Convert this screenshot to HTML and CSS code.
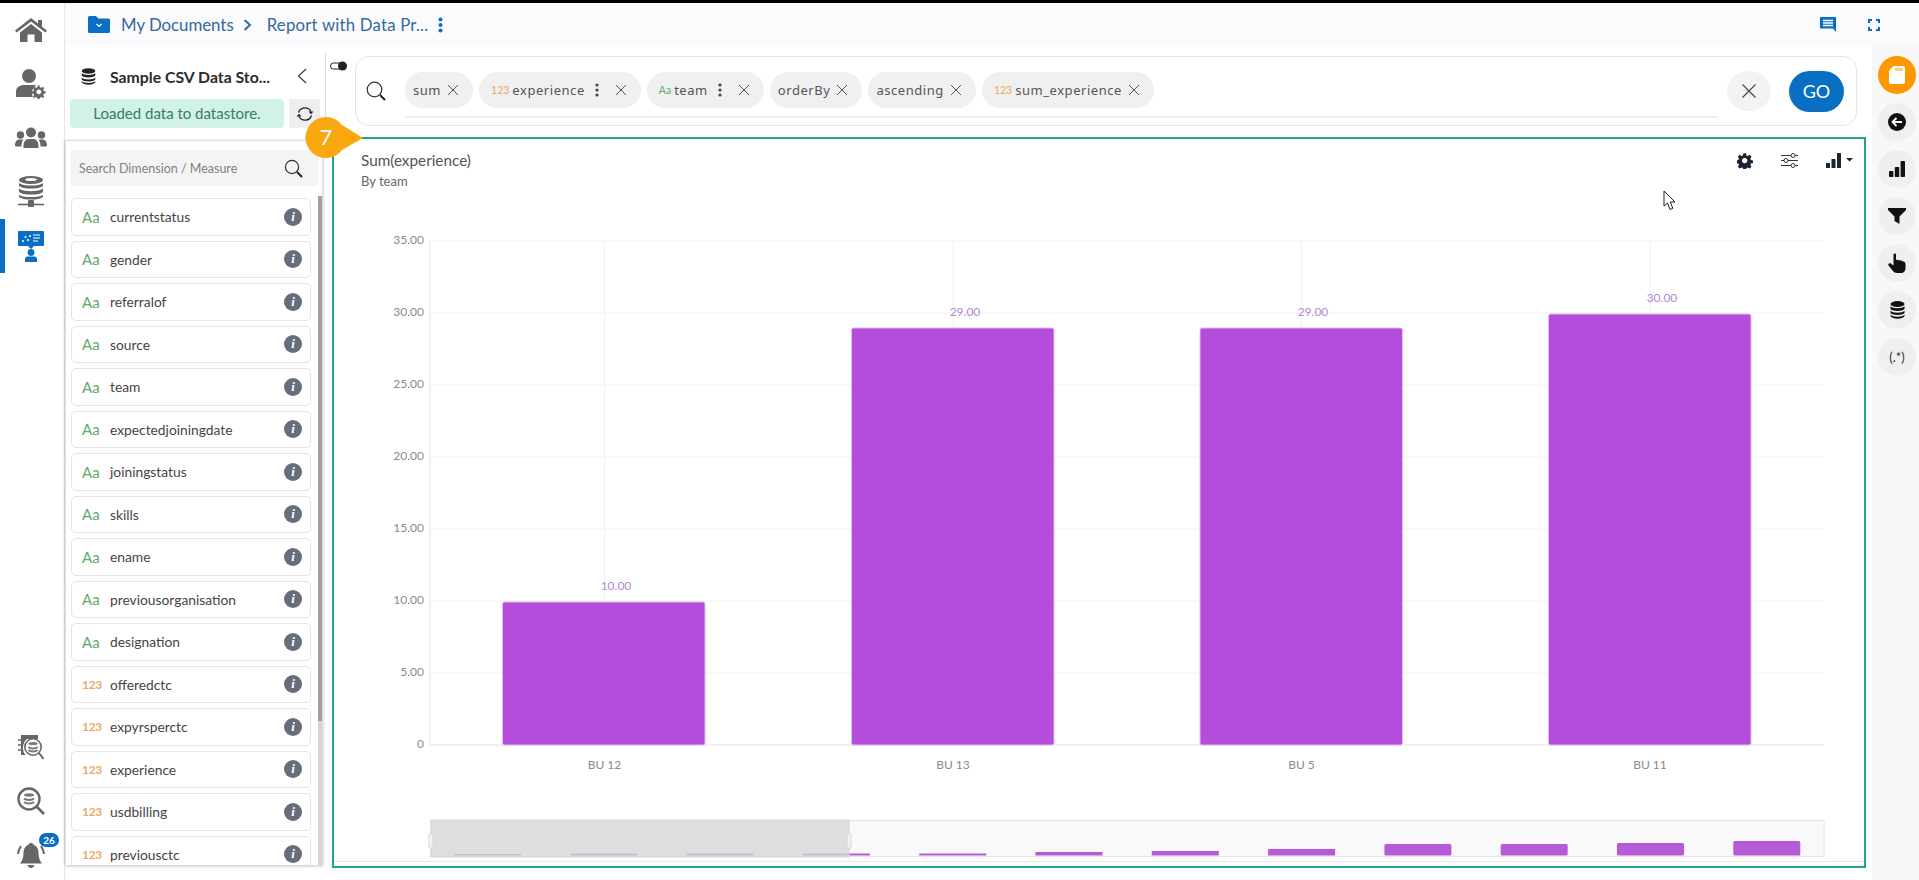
FILE: index.html
```html
<!DOCTYPE html>
<html lang="en">
<head>
<meta charset="utf-8">
<title>Report with Data Prep</title>
<link rel="stylesheet" href="styles.css">
</head>
<body>
<div class="app">
  <nav class="nav">
    <a class="nav-item"><svg width="32" height="26" viewBox="0 0 32 26"><path fill="#666" d="M16 1 L23 6.5 V3 H27 V9.7 L32 13.6 L30.4 15.6 L16 4.4 L1.6 15.6 L0 13.6 Z M5 15.6 L16 7 L27 15.6 V25 H19.5 V17.5 H12.5 V25 H5 Z"/></svg></a>
    <a class="nav-item"><svg width="30" height="30" viewBox="0 0 30 30"><circle cx="13" cy="7" r="7" fill="#666"/><path fill="#666" d="M0 28 V23 C0 18 4 16 8 16 H18 C19 16 20 16.3 20.5 16.6 C17.5 18 16 21 16 24 C16 25.5 16.5 27 17 28 Z"/><path fill="#666" fill-rule="evenodd" d="M23 17.5 l1.2 0 .5 2 1.6.7 1.8-1 1.2 1.2-1 1.8.7 1.6 2 .5v1.8l-2 .5-.7 1.6 1 1.8-1.2 1.2-1.8-1-1.6.7-.5 2h-1.8l-.5-2-1.6-.7-1.8 1-1.2-1.2 1-1.8-.7-1.6-2-.5v-1.8l2-.5.7-1.6-1-1.8 1.2-1.2 1.8 1 1.6-.7zM23.6 22a2.6 2.6 0 1 0 .01 0z" transform="scale(.93) translate(1 0)"/></svg></a>
    <a class="nav-item"><svg width="32" height="22" viewBox="0 0 32 22"><circle cx="16" cy="5.5" r="5" fill="#666"/><circle cx="5.5" cy="8" r="3.7" fill="#666"/><circle cx="26.5" cy="8" r="3.7" fill="#666"/><path fill="#666" d="M8.5 21 C8 14 11 12 14 12 H18 C21 12 24 14 23.5 21 Z M0 19 C0 14 2 12.5 5 12.5 H8.5 C7 14 6.5 16 6.5 19.5 H1.5 Z M32 19 C32 14 30 12.5 27 12.5 H23.5 C25 14 25.5 16 25.5 19.5 H30.5 Z"/></svg></a>
    <a class="nav-item"><svg width="28" height="32" viewBox="0 0 28 32"><ellipse cx="14" cy="4" rx="12" ry="4" fill="#666"/><ellipse cx="14" cy="3.6" rx="6" ry="1.5" fill="#fff"/><path fill="#666" d="M2 7 C5 10.4 23 10.4 26 7 V10 C23 13.4 5 13.4 2 10 Z M2 12.6 C5 16 23 16 26 12.6 V16 C23 19.4 5 19.4 2 16 Z M2 18.4 C5 22 23 22 26 18.4 V21 C23 24.4 5 24.4 2 21 Z"/><rect x="11" y="24" width="6" height="7" rx="1" fill="#666"/><path stroke="#666" stroke-width="1.6" d="M1 28.5 H27"/></svg></a>
    <a class="nav-item nav-active"><svg width="26" height="31" viewBox="0 0 26 31"><path fill="#0a6fc2" d="M1 0 H25 a1 1 0 0 1 1 1 V14 a1 1 0 0 1 -1 1 H16 L13 18 L10 15 H1 a1 1 0 0 1 -1 -1 V1 a1 1 0 0 1 1 -1 Z"/><g fill="#fff"><circle cx="5" cy="10" r="1"/><circle cx="7.5" cy="6" r="1"/><circle cx="10" cy="9" r="1"/><circle cx="12" cy="5" r="1"/></g><path fill="none" stroke="#fff" stroke-width="1" d="M15 4 H22 M15 7 H22 M15 10 H20"/><circle cx="13" cy="21.5" r="3.4" fill="#0a6fc2"/><path fill="#0a6fc2" d="M7 31 V28 C7 26 9 25.5 10 25.5 H16 C17 25.5 19 26 19 28 V31 Z"/></svg></a>
    <div class="nav-spacer"></div>
    <a class="nav-item nav-low"><svg width="26" height="27" viewBox="0 0 26 27"><path fill="#666" d="M3 1 H20 V5 H9 C6 7 5 11 5 14 C5 17 6 20 8 21 H3 Z"/><path stroke="#666" stroke-width="1.5" d="M0 6 H4 M0 11 H4 M0 16 H4"/><circle cx="15" cy="13" r="8.2" fill="#fff" stroke="#666" stroke-width="1.6"/><ellipse cx="15" cy="9.5" rx="4.6" ry="1.6" fill="#777"/><path stroke="#777" stroke-width="2" d="M10.4 13 C12 15 18 15 19.6 13 M10.4 16 C12 18 18 18 19.6 16" fill="none"/><path stroke="#666" stroke-width="2" d="M21 19 L25.5 25"/></svg></a>
    <a class="nav-item nav-low"><svg width="28" height="28" viewBox="0 0 28 28"><circle cx="12" cy="12" r="10.5" fill="none" stroke="#666" stroke-width="2.4"/><ellipse cx="12" cy="8" rx="5" ry="1.7" fill="#777"/><path stroke="#777" stroke-width="2" d="M7 11.5 C9 13.4 15 13.4 17 11.5 M7 15 C9 17 15 17 17 15" fill="none"/><path stroke="#666" stroke-width="2.6" d="M19.5 19.5 L27 27"/></svg></a>
    <a class="nav-item nav-low"><svg width="28" height="28" viewBox="0 0 28 28"><path fill="#666" d="M14 2 C16 2 16.5 3 16.8 4 C20 5 21.5 8 21.5 12 C21.5 17 23 20 25 22.5 H3 C5 20 6.5 17 6.5 12 C6.5 8 8 5 11.2 4 C11.5 3 12 2 14 2 Z M10.5 24 H17.5 C17 26 15.5 27 14 27 C12.5 27 11 26 10.5 24 Z"/><path fill="none" stroke="#666" stroke-width="2" d="M4 5 C2 8 1.2 10 1 13 M24 5 C26 8 26.8 10 27 13"/></svg><span class="bell-count">26</span></a>
  </nav>

  <div class="main">
    <header class="topbar">
      <svg class="folder" width="22" height="17" viewBox="0 0 22 17"><path fill="#0a6fc2" d="M1.5 0 H8 L10.5 2.5 H20.5 A1.5 1.5 0 0 1 22 4 V15.5 A1.5 1.5 0 0 1 20.5 17 H1.5 A1.5 1.5 0 0 1 0 15.5 V1.5 A1.5 1.5 0 0 1 1.5 0 Z"/><path fill="none" stroke="#fff" stroke-width="1.2" d="M8.5 8 L11 10.5 L13.5 8"/></svg>
      <span class="crumb">My Documents</span>
      <svg class="crumb-sep" width="9" height="12" viewBox="0 0 9 12"><path fill="none" stroke="#2f6ea5" stroke-width="2" d="M1.5 1 L7 6 L1.5 11"/></svg>
      <span class="crumb crumb-doc">Report with Data Pr...</span>
      <svg class="crumb-more" width="5" height="16" viewBox="0 0 5 16"><circle cx="2.5" cy="2.5" r="2" fill="#0a6fc2"/><circle cx="2.5" cy="8" r="2" fill="#0a6fc2"/><circle cx="2.5" cy="13.5" r="2" fill="#0a6fc2"/></svg>
      <div class="topbar-tools">
        <svg width="17" height="15" viewBox="0 0 17 15"><path fill="#0a6fc2" d="M0 0 H16 V11 V15 L13 11.5 H0 Z"/><path stroke="#fff" stroke-width="1.3" d="M3 3.5 H13 M3 6 H13 M3 8.5 H13"/></svg>
        <svg width="12" height="12" viewBox="0 0 12 12"><path fill="none" stroke="#0a6fc2" stroke-width="2" d="M1 4 V1 H4 M8 1 H11 V4 M11 8 V11 H8 M4 11 H1 V8"/></svg>
      </div>
    </header>

    <div class="work">
      <aside class="left">
        <div class="ds-head">
          <svg width="15" height="17" viewBox="0 0 15 17"><ellipse cx="7.5" cy="3" rx="6.8" ry="2.8" fill="#222"/><path fill="#222" d="M.7 5 C2 7.5 13 7.5 14.3 5 V7.5 C13 10 2 10 .7 7.5 Z M.7 9.5 C2 12 13 12 14.3 9.5 V11.5 C13 14 2 14 .7 11.5 Z M.7 13 C2 15.5 13 15.5 14.3 13 V14 C13 17.5 2 17.5 .7 14 Z"/></svg>
          <span class="ds-title">Sample CSV Data Sto...</span>
          <svg class="ds-back" width="10" height="16" viewBox="0 0 10 16"><path fill="none" stroke="#333" stroke-width="1.1" d="M9 1 L1.5 8 L9 15"/></svg>
        </div>
        <div class="ds-status">
          <div class="loaded">Loaded data to datastore.</div>
          <button class="refresh"><svg width="18" height="16" viewBox="0 0 18 16"><path fill="none" stroke="#222" stroke-width="1.3" d="M2.5 6.5 A6.8 6.8 0 0 1 15 5.5 M15.5 9.5 A6.8 6.8 0 0 1 3 10.5"/><path fill="#222" d="M12.5 5.5 H17.5 L15 8.2 Z M.5 10.5 H5.5 L3 7.8 Z"/></svg></button>
        </div>
        <div class="fields">
          <div class="field-search">
            <span>Search Dimension / Measure</span>
            <svg width="19" height="19" viewBox="0 0 19 19"><circle cx="8" cy="8" r="6.6" fill="none" stroke="#333" stroke-width="1.2"/><path stroke="#222" stroke-width="2" d="M13 13 L18 18"/></svg>
          </div>
          <div class="field-list">
            <div class="field"><span class="tag tag-a">Aa</span><span class="fname">currentstatus</span><span class="info">i</span></div>
            <div class="field"><span class="tag tag-a">Aa</span><span class="fname">gender</span><span class="info">i</span></div>
            <div class="field"><span class="tag tag-a">Aa</span><span class="fname">referralof</span><span class="info">i</span></div>
            <div class="field"><span class="tag tag-a">Aa</span><span class="fname">source</span><span class="info">i</span></div>
            <div class="field"><span class="tag tag-a">Aa</span><span class="fname">team</span><span class="info">i</span></div>
            <div class="field"><span class="tag tag-a">Aa</span><span class="fname">expectedjoiningdate</span><span class="info">i</span></div>
            <div class="field"><span class="tag tag-a">Aa</span><span class="fname">joiningstatus</span><span class="info">i</span></div>
            <div class="field"><span class="tag tag-a">Aa</span><span class="fname">skills</span><span class="info">i</span></div>
            <div class="field"><span class="tag tag-a">Aa</span><span class="fname">ename</span><span class="info">i</span></div>
            <div class="field"><span class="tag tag-a">Aa</span><span class="fname">previousorganisation</span><span class="info">i</span></div>
            <div class="field"><span class="tag tag-a">Aa</span><span class="fname">designation</span><span class="info">i</span></div>
            <div class="field"><span class="tag tag-n">123</span><span class="fname">offeredctc</span><span class="info">i</span></div>
            <div class="field"><span class="tag tag-n">123</span><span class="fname">expyrsperctc</span><span class="info">i</span></div>
            <div class="field"><span class="tag tag-n">123</span><span class="fname">experience</span><span class="info">i</span></div>
            <div class="field"><span class="tag tag-n">123</span><span class="fname">usdbilling</span><span class="info">i</span></div>
            <div class="field"><span class="tag tag-n">123</span><span class="fname">previousctc</span><span class="info">i</span></div>
          </div>
          <div class="scrollbar"><div class="scroll-thumb"></div></div>
        </div>
      </aside>

      <section class="center">
        <svg class="toggle" width="18" height="10" viewBox="0 0 18 10"><rect x=".5" y="2" width="14" height="6" rx="3" fill="#fff" stroke="#222"/><circle cx="12.5" cy="5" r="4.5" fill="#222"/></svg>
        <div class="query">
          <svg class="query-glass" width="20" height="20" viewBox="0 0 20 20"><circle cx="8.5" cy="8.5" r="7.3" fill="none" stroke="#333" stroke-width="1.2"/><path stroke="#222" stroke-width="2" d="M14 14 L19 19"/></svg>
          <div class="chips">
            <span class="chip">sum<svg class="x" viewBox="0 0 12 12"><path d="M1 1 L11 11 M11 1 L1 11"/></svg></span>
            <span class="chip"><i class="chip-n">123</i>experience<svg class="dots" viewBox="0 0 4 14"><circle cx="2" cy="2" r="1.6"/><circle cx="2" cy="7" r="1.6"/><circle cx="2" cy="12" r="1.6"/></svg><svg class="x" viewBox="0 0 12 12"><path d="M1 1 L11 11 M11 1 L1 11"/></svg></span>
            <span class="chip"><i class="chip-a">Aa</i>team<svg class="dots" viewBox="0 0 4 14"><circle cx="2" cy="2" r="1.6"/><circle cx="2" cy="7" r="1.6"/><circle cx="2" cy="12" r="1.6"/></svg><svg class="x" viewBox="0 0 12 12"><path d="M1 1 L11 11 M11 1 L1 11"/></svg></span>
            <span class="chip">orderBy<svg class="x" viewBox="0 0 12 12"><path d="M1 1 L11 11 M11 1 L1 11"/></svg></span>
            <span class="chip">ascending<svg class="x" viewBox="0 0 12 12"><path d="M1 1 L11 11 M11 1 L1 11"/></svg></span>
            <span class="chip"><i class="chip-n">123</i>sum_experience<svg class="x" viewBox="0 0 12 12"><path d="M1 1 L11 11 M11 1 L1 11"/></svg></span>
          </div>
          <button class="clear"><svg width="14" height="14" viewBox="0 0 14 14"><path fill="none" stroke="#444" stroke-width="1.1" d="M.5 .5 L13.5 13.5 M13.5 .5 L.5 13.5"/></svg></button>
          <button class="go">GO</button>
        </div>

        <div class="frame">
          <div class="chart-head">
            <div>
              <div class="chart-title">Sum(experience)</div>
              <div class="chart-sub">By team</div>
            </div>
            <div class="chart-tools">
              <svg width="16" height="16" viewBox="0 0 24 24"><path fill="#1b2433" fill-rule="evenodd" d="M10 1 h4 l.7 3.2 2 .9 2.8-1.8 2.8 2.8-1.8 2.8.9 2 3.2.7 v4 l-3.2.7-.9 2 1.8 2.8-2.8 2.8-2.8-1.8-2 .9-.7 3.2 h-4 l-.7-3.2-2-.9-2.8 1.8-2.8-2.8 1.8-2.8-.9-2-3.2-.7 v-4 l3.2-.7.9-2-1.8-2.8 2.8-2.8 2.8 1.8 2-.9 z M12 8 a4 4 0 1 0 .01 0 z" transform="translate(-.5 -.5)"/></svg>
              <svg width="17" height="15" viewBox="0 0 17 15"><g fill="none" stroke="#333" stroke-width="1"><path d="M0 2.5 H10 M14 2.5 H17 M0 7.5 H3 M7 7.5 H17 M0 12.5 H10 M14 12.5 H17"/><circle cx="12" cy="2.5" r="2"/><circle cx="5" cy="7.5" r="2"/><circle cx="12" cy="12.5" r="2"/></g></svg>
              <svg width="28" height="15" viewBox="0 0 28 15"><g fill="#1b2433"><rect x="0" y="10" width="4" height="5" rx=".6"/><rect x="5.5" y="6" width="4" height="9" rx=".6"/><rect x="11" y="0" width="4" height="15" rx=".6"/><path d="M20 5 H27 L23.5 8.5 Z"/></g></svg>
            </div>
          </div>
          <svg class="chart" viewBox="334 190 1530 676" preserveAspectRatio="none">
            <g stroke="#f1f0f2" stroke-width="1">
              <path d="M430 241 H1824 M430 313 H1824 M430 385 H1824 M430 457 H1824 M430 529 H1824 M430 601 H1824 M430 673 H1824"/>
              <path d="M604.5 241 V745 M953 241 V745 M1301.5 241 V745 M1650 241 V745"/>
            </g>
            <path d="M430 241 V745 H1824" fill="none" stroke="#ececee" stroke-width="1.5"/>
            <g class="y-labels">
              <text x="424" y="244">35.00</text>
              <text x="424" y="316">30.00</text>
              <text x="424" y="388">25.00</text>
              <text x="424" y="460">20.00</text>
              <text x="424" y="532">15.00</text>
              <text x="424" y="604">10.00</text>
              <text x="424" y="676">5.00</text>
              <text x="424" y="748">0</text>
            </g>
            <g class="bars">
              <rect x="502.5" y="602" width="202.5" height="143" rx="2"/>
              <rect x="851.5" y="328" width="202.5" height="417" rx="2"/>
              <rect x="1200" y="328" width="202.5" height="417" rx="2"/>
              <rect x="1548.5" y="314" width="202.5" height="431" rx="2"/>
            </g>
            <g class="val-labels">
              <text x="616" y="590">10.00</text>
              <text x="965" y="316">29.00</text>
              <text x="1313" y="316">29.00</text>
              <text x="1662" y="302">30.00</text>
            </g>
            <g class="x-labels">
              <text x="604.5" y="769">BU 12</text>
              <text x="953" y="769">BU 13</text>
              <text x="1301.5" y="769">BU 5</text>
              <text x="1650" y="769">BU 11</text>
            </g>
            <path d="M334 861.5 H1864" stroke="#e6e6ea" stroke-width="1"/>
            <rect x="431" y="820.5" width="1393" height="36" fill="#f9f8fa" stroke="#e3e3e6"/>
            <g class="mini">
              <rect x="454" y="854" width="67" height="1.5"/>
              <rect x="570.3" y="853.5" width="67" height="2"/>
              <rect x="686.6" y="853.5" width="67" height="2"/>
              <rect x="802.9" y="853.5" width="67" height="2"/>
              <rect x="919.2" y="853.5" width="67" height="2"/>
              <rect x="1035.5" y="852" width="67" height="3.5"/>
              <rect x="1151.8" y="851" width="67" height="4.5"/>
              <rect x="1268.1" y="849" width="67" height="6.5"/>
              <rect x="1384.4" y="844" width="67" height="11.5" rx="1.5"/>
              <rect x="1500.7" y="844" width="67" height="11.5" rx="1.5"/>
              <rect x="1617" y="843" width="67" height="12.5" rx="1.5"/>
              <rect x="1733.3" y="841" width="67" height="14.5" rx="1.5"/>
            </g>
            <rect x="431" y="820" width="418" height="37" fill="#d6d6d6" fill-opacity=".78" stroke="#d6d6d6"/>
            <rect x="429" y="834" width="4" height="14" fill="#f2f2f2" stroke="#d8d8d8"/>
            <rect x="847" y="834" width="4" height="14" fill="#f2f2f2" stroke="#d8d8d8"/>
          </svg>
        </div>
      </section>

      <aside class="rail">
        <button class="rail-btn rail-on"><svg width="16" height="18" viewBox="0 0 16 18"><path fill="#fff" d="M4.5 0 H14 a2 2 0 0 1 2 2 V16 a2 2 0 0 1 -2 2 H2 a2 2 0 0 1 -2 -2 V5 Z"/><path stroke="#ff9800" stroke-width="1" d="M7 2 V5 M9 2 V5 M11 2 V5 M13 2 V5"/></svg></button>
        <button class="rail-btn"><svg width="18" height="18" viewBox="0 0 18 18"><circle cx="9" cy="9" r="9" fill="#111"/><path fill="none" stroke="#fff" stroke-width="1.8" d="M14 9 H5 M8.5 5 L4.5 9 L8.5 13"/></svg></button>
        <button class="rail-btn"><svg width="16" height="16" viewBox="0 0 16 16"><rect y="10" width="4.4" height="6" rx=".7" fill="#111"/><rect x="5.8" y="6" width="4.4" height="10" rx=".7" fill="#111"/><rect x="11.6" y="0" width="4.4" height="16" rx=".7" fill="#111"/></svg></button>
        <button class="rail-btn"><svg width="18" height="16" viewBox="0 0 18 16"><path fill="#111" d="M0 0 H18 V2 L11.5 8.5 V16 L6.5 13 V8.5 L0 2 Z"/></svg></button>
        <button class="rail-btn"><svg width="18" height="20" viewBox="0 0 18 20"><path fill="#111" d="M5.5 1.5 C5.5 0 8 0 8 1.5 V7 C9 6.5 10.5 6.5 11 7.5 C12 7 13.5 7.3 14 8.3 C15.5 8 17.5 9 17.5 11 V15 C17.5 18 15.5 20 13 20 H9 C7 20 6 19 5 18 L.5 12.5 C-.5 11 1.5 9.5 3 10.5 L5.5 12.5 Z"/></svg></button>
        <button class="rail-btn"><svg width="15" height="18" viewBox="0 0 15 18"><ellipse cx="7.5" cy="3" rx="7" ry="3" fill="#111"/><path fill="#111" d="M.5 5 C2 8 13 8 14.5 5 V8 C13 10.5 2 10.5 .5 8 Z M.5 9.5 C2 12.5 13 12.5 14.5 9.5 V12 C13 14.5 2 14.5 .5 12 Z M.5 13.5 C2 16.5 13 16.5 14.5 13.5 V15 C13 18.5 2 18.5 .5 15 Z"/></svg></button>
        <button class="rail-btn rail-text">(.*)</button>
      </aside>
    </div>
  </div>
</div>

<svg class="step" width="62" height="42" viewBox="0 0 62 42"><path fill="#f9a80f" d="M21 0 A20.5 20.5 0 1 0 21 41 C28 41 33 38 37 33 L58 21 L37 8 C33 3 28 0 21 0 Z"/><text x="21" y="28" class="step-num">7</text></svg>
<svg class="cursor" width="14" height="21" viewBox="0 0 14 21"><path fill="#fff" stroke="#222" stroke-width="1" d="M1 1 V16 L4.5 13 L7 19.5 L9.8 18.3 L7.3 12 H12 Z"/></svg>
</body>
</html>
```

FILE: styles.css
```css
* { box-sizing: border-box; }
html, body { margin: 0; height: 100%; }
body { background: #fff; font-family: "Lato", "Noto Sans", sans-serif; color: #444; overflow: hidden; position: relative; }
button { font-family: inherit; border: 0; padding: 0; cursor: pointer; }

.app { display: flex; height: 880px; border-top: 3px solid #000; }

.nav { width: 65px; flex: none; display: flex; flex-direction: column; border-right: 1px solid #e6e6e8; }
.nav-item { height: 54px; flex: none; display: flex; align-items: center; justify-content: center; position: relative; padding-right: 2px; }
.nav-low { padding-top: 4px; }
.nav-active::before { content: ""; position: absolute; left: 0; top: 0; width: 5px; height: 100%; background: #0a6fc2; }
.nav-spacer { flex: 1; }
.bell-count { position: absolute; left: 39px; top: 7px; width: 20px; height: 14px; border-radius: 8px; background: #0a6fc2; color: #fff; font-size: 10px; font-weight: 700; line-height: 14px; text-align: center; }

.main { flex: 1; min-width: 0; display: flex; flex-direction: column; }

.topbar { height: 43px; flex: none; display: flex; align-items: center; padding-left: 23px; background: #fbfafc; }
.folder { margin-right: 11px; }
.crumb { font-size: 16.8px; color: #35699b; }
.crumb-doc { letter-spacing: .2px; }
.crumb-sep { margin: 0 15px 0 9px; }
.crumb-more { margin-left: 10px; }
.topbar-tools { margin-left: auto; display: flex; align-items: center; gap: 31px; padding-right: 39px; }

.work { flex: 1; min-height: 0; display: flex; }

.left { width: 261px; flex: none; display: flex; flex-direction: column; padding-top: 15px; position: relative; }
.left::after { content: ""; position: absolute; right: 0; top: 6px; height: 88px; width: 1px; background: #ddd; }
.ds-head { height: 30px; flex: none; display: flex; align-items: center; padding-left: 16px; }
.ds-title { margin-left: 14px; font-size: 15.8px; font-weight: 700; color: #2a2a2a; }
.ds-back { margin-left: auto; margin-right: 19px; }
.ds-status { display: flex; gap: 5px; margin: 8px 6px 0 5px; height: 29px; flex: none; }
.loaded { width: 214px; background: #d2f2e7; border-radius: 4px; color: #347e64; font-size: 15px; line-height: 29px; text-align: center; }
.refresh { width: 31px; background: #eeeeee; display: flex; align-items: center; justify-content: center; }

.fields { position: relative; width: 258px; height: 725px; margin-top: 12px; flex: none; overflow: hidden; border: 1px solid #dedede; border-bottom: 0; box-shadow: 0 1px 3px rgba(0,0,0,.25); background: #fff; padding: 9px 5px 0; }
.field-search { height: 36px; width: 247px; background: #f4f4f4; display: flex; align-items: center; justify-content: space-between; padding: 0 15px 0 8px; font-size: 12.5px; color: #808080; }
.field-list { margin-top: 12px; width: 240px; display: flex; flex-direction: column; gap: 5px; }
.field { height: 37.5px; flex: none; display: flex; align-items: center; border: 1px solid #e4e4e4; border-radius: 5px; padding: 0 8px 0 10px; }
.tag { width: 28px; flex: none; }
.tag-a { color: #5fa96f; font-size: 15px; }
.tag-n { color: #e8ab68; font-weight: 700; font-size: 12px; letter-spacing: -.3px; }
.fname { font-size: 13.8px; color: #444; }
.info { margin-left: auto; width: 18px; height: 18px; border-radius: 50%; background: #666e7c; color: #fff; font: italic 700 13px/18px "Liberation Serif", serif; text-align: center; }
.scrollbar { position: absolute; left: 252px; top: 55px; bottom: 0; width: 6px; background: #d4d4d4; }
.scroll-thumb { height: 525px; background: #a0a0a0; }

.center { flex: 1; min-width: 0; position: relative; padding: 10px 6px 0 6px; display: flex; flex-direction: column; }
.toggle { position: absolute; left: 4px; top: 15px; }
.query { height: 70px; flex: none; margin: 0 9px 0 23px; border: 1px solid #e4e4e4; border-radius: 14px; display: flex; align-items: center; padding: 0 12px 0 10px; position: relative; }
.query::after { content: ""; position: absolute; left: 49px; right: 138px; bottom: 7px; height: 2px; background: #efefef; }
.query-glass { flex: none; }
.chips { display: flex; gap: 6px; margin-left: 19px; flex: 1; margin-top: -2px; }
.chip { height: 36px; border-radius: 18px; background: #f0f0f1; display: inline-flex; align-items: center; padding: 0 14px 0 8px; font-family: "Noto Sans", sans-serif; font-size: 13px; letter-spacing: .55px; color: #555; white-space: nowrap; }
.chip i { font-style: normal; font-size: 10.5px; letter-spacing: 0; margin: 0 3px 0 4px; font-family: "Lato", sans-serif; }
.chip-n { color: #e8a860; }
.chip-a { color: #5fa96f; }
.x { width: 12px; height: 12px; margin-left: 6px; flex: none; }
.x path { stroke: #555; stroke-width: 1; fill: none; }
.dots { width: 4px; height: 14px; margin: 0 16px 0 10px; fill: #444; flex: none; }
.dots + .x { margin-left: 0; }
.clear { width: 44px; height: 40px; border-radius: 50%; background: #f3f3f3; display: flex; align-items: center; justify-content: center; margin-right: 18px; }
.go { width: 55px; height: 41px; border-radius: 21px; background: #0a6fc2; color: #fff; font-size: 18px; }

.frame { margin-top: 11px; height: 731px; border: 2px solid #1fa58c; display: flex; flex-direction: column; background: #fff; }
.chart-head { height: 51px; flex: none; display: flex; justify-content: space-between; padding: 11px 10px 0 27px; }
.chart-title { font-size: 15.3px; color: #555; line-height: 20px; }
.chart-sub { font-size: 13px; color: #666; line-height: 20px; margin-top: 1px; }
.chart-tools { display: flex; gap: 28px; align-items: flex-start; padding-top: 3px; }
.chart { flex: 1; width: 100%; min-height: 0; display: block; }
.y-labels text { font-size: 12px; fill: #8a8a8a; text-anchor: end; }
.x-labels text { font-size: 12px; fill: #8a8a8a; text-anchor: middle; }
.val-labels text { font-size: 12px; fill: #b48ad0; text-anchor: middle; }
.bars rect { fill: #b44ddc; stroke: #e6b8f2; stroke-width: 1; }
.mini rect { fill: #b75ad8; }

.rail { width: 47px; flex: none; background: #f8f8f9; display: flex; flex-direction: column; align-items: center; padding: 10px 0 0 3px; gap: 9px; }
.rail-btn { width: 38px; height: 38px; border-radius: 50%; background: #efefef; display: flex; align-items: center; justify-content: center; flex: none; }
.rail-on { background: #ff9800; }
.rail-text { font-size: 13px; color: #333; }

.step { position: absolute; left: 305px; top: 117px; }
.step-num { font-size: 22px; fill: #fff; text-anchor: middle; font-family: "Lato", sans-serif; }
.cursor { position: absolute; left: 1663px; top: 190px; }
```
